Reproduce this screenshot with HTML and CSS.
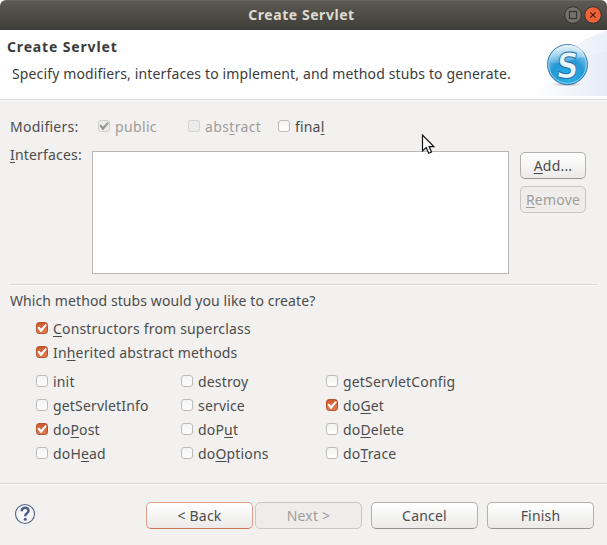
FILE: index.html
```html
<!DOCTYPE html>
<html lang="en">
<head>
<meta charset="utf-8">
<title>Create Servlet</title>
<link rel="stylesheet" href="styles.css">
</head>
<body>
<div class="window">
  <div class="titlebar">
    <span class="title">Create Servlet</span>
    <svg class="controls" width="40" height="18" viewBox="0 0 40 18">
      <circle cx="9" cy="9" r="8.3" fill="#74726b" stroke="#34332e"/>
      <rect x="5.5" y="5.5" width="7" height="7" fill="none" stroke="#33322e" stroke-width="1.2"/>
      <circle cx="29" cy="9" r="8.3" fill="#ed6237" stroke="#34332e"/>
      <path d="M26.3 6.3l5.4 5.4m0-5.4l-5.4 5.4" stroke="#4a2015" stroke-width="1.2"/>
    </svg>
  </div>
  <header class="banner">
    <div class="banner-text">
      <h1>Create Servlet</h1>
      <p>Specify modifiers, interfaces to implement, and method stubs to generate.</p>
    </div>
    <svg class="logo" width="75" height="66" viewBox="0 0 75 66">
      <defs>
        <linearGradient id="wash"><stop offset="0" stop-color="#fff"/><stop offset="1" stop-color="#e3e9f6"/></linearGradient>
        <radialGradient id="ball" cx=".5" cy=".8" r=".8"><stop offset="0" stop-color="#27b6e8"/><stop offset=".5" stop-color="#2499d5"/><stop offset="1" stop-color="#a5d5ed"/></radialGradient>
        <radialGradient id="shade"><stop offset="0" stop-color="#8d8288"/><stop offset="1" stop-color="#fff" stop-opacity="0"/></radialGradient>
        <linearGradient id="shine" x2="0" y2="1"><stop offset="0" stop-color="#fff" stop-opacity=".75"/><stop offset="1" stop-color="#fff" stop-opacity=".1"/></linearGradient>
      </defs>
      <path d="M0 66C28 46 30 12 75 1V66Z" fill="url(#wash)" opacity=".75"/>
      <path d="M0 66C22 48 40 26 75 22V66Z" fill="url(#wash)" opacity=".65"/>
      <ellipse cx="35" cy="54.5" rx="20" ry="2.5" fill="url(#shade)"/>
      <circle cx="35.5" cy="34.5" r="20" fill="url(#ball)" stroke="#3c79b4"/>
      <circle cx="35.5" cy="34.5" r="18.8" fill="none" stroke="#b5e0f4" stroke-opacity=".7"/>
      <path d="M18 32C18 10 53 10 53 28C43 25 34 37 18 32Z" fill="url(#shine)"/>
      <text class="logo-letter" text-anchor="middle" transform="translate(34.3 47.5) skewX(-6) scale(.88 1)">S</text>
    </svg>
  </header>
  <main>
    <div class="row modifiers">
      <span class="label">Modifiers:</span>
      <label class="check off on"><i></i><span>public</span></label>
      <label class="check off"><i></i><span>abs<u>t</u>ract</span></label>
      <label class="check"><i></i><span>fina<u>l</u></span></label>
    </div>
    <div class="row interfaces">
      <span class="label"><u>I</u>nterfaces:</span>
      <div class="list"></div>
      <div class="side">
        <button><span><u>A</u>dd...</span></button>
        <button disabled><span><u>R</u>emove</span></button>
      </div>
    </div>
    <div class="rule"></div>
    <p class="question">Which method stubs would you like to create?</p>
    <div class="stubs wide">
      <label class="check on"><i></i><span><u>C</u>onstructors from superclass</span></label>
      <label class="check on"><i></i><span>In<u>h</u>erited abstract methods</span></label>
    </div>
    <div class="stubs grid">
      <label class="check"><i></i><span>init</span></label>
      <label class="check"><i></i><span>destroy</span></label>
      <label class="check"><i></i><span>getServletConfig</span></label>
      <label class="check"><i></i><span>getServletInfo</span></label>
      <label class="check"><i></i><span>service</span></label>
      <label class="check on"><i></i><span>do<u>G</u>et</span></label>
      <label class="check on"><i></i><span>do<u>P</u>ost</span></label>
      <label class="check"><i></i><span>doP<u>u</u>t</span></label>
      <label class="check"><i></i><span>do<u>D</u>elete</span></label>
      <label class="check"><i></i><span>doH<u>e</u>ad</span></label>
      <label class="check"><i></i><span>do<u>O</u>ptions</span></label>
      <label class="check"><i></i><span>do<u>T</u>race</span></label>
    </div>
  </main>
  <footer>
    <svg width="22" height="22" viewBox="0 0 22 22">
      <circle cx="11" cy="11" r="9.5" fill="#f6f6f8" stroke="#536381" stroke-width="1.1"/>
      <path d="M7.7 8.2C7.8 3.6 14.6 3.7 14.5 7.8C14.4 10.3 11.2 10.2 11.2 13.2" fill="none" stroke="#4a5c86" stroke-width="2.4"/>
      <circle cx="11.2" cy="16.2" r="1.5" fill="#4a5c86"/>
    </svg>
    <div class="actions">
      <button class="focus">&lt; Back</button>
      <button disabled>Next &gt;</button>
      <button class="cancel">Cancel</button>
      <button class="finish">Finish</button>
    </div>
  </footer>
  <svg class="pointer" width="14" height="21" viewBox="0 0 14 21">
    <path d="M1.5 1V17L5.2 13.6L7.7 19.2L10.5 18L8.1 12.6H12.8Z" fill="#fff" stroke="#111" stroke-width="1.2"/>
  </svg>
</div>
</body>
</html>
```
FILE: styles.css
```css
* { box-sizing: border-box; }
body { margin: 0; background: #fff; }
.window {
  position: relative;
  width: 607px;
  height: 545px;
  display: flex;
  flex-direction: column;
  overflow: hidden;
  background: #f2f1f0;
  border-radius: 6px 6px 0 0;
  color: #4c4c4c;
  font: 14px/20px "Noto Sans", "Open Sans", sans-serif;
  letter-spacing: .14px;
  white-space: nowrap;
}
.titlebar {
  height: 30px;
  flex: none;
  display: grid;
  grid-template-columns: 1fr auto 1fr;
  align-items: center;
  padding: 0 3px 0 0;
  background: linear-gradient(#5c5a52, #3e3d38);
  border-top: 1px solid #6a675f;
  color: #dfdbd2;
}
.title { grid-column: 2; margin: -2px 1px 0 0; font-weight: 700; letter-spacing: .55px; }
.controls { justify-self: end; margin-top: -1px; }
.banner {
  height: 70px;
  flex: none;
  display: flex;
  justify-content: space-between;
  background: #fff;
  border-bottom: 1px solid #d9dadb;
}
.banner-text { padding: 7px 0 0 7px; }
h1 { margin: 0 0 7px; font-size: 14px; line-height: 20px; letter-spacing: .85px; color: #3c3c3c; }
.banner p { margin: 0 0 0 5px; color: #3c3c3c; }
.logo-letter {
  font: 700 35px "DejaVu Sans", sans-serif;
  letter-spacing: 0;
  fill: #e9f7fd;
  stroke: #286ca8;
  stroke-width: 1;
}
u { text-decoration: underline; text-decoration-thickness: 1px; text-underline-offset: 2px; text-decoration-skip-ink: none; }
main { flex: 1; padding: 16px 10px 0; border-top: 1px solid #faf9f9; }
.row { display: flex; }
.label { width: 82px; flex: none; }
.modifiers { height: 20px; margin-bottom: 8px; }
.modifiers .label, .interfaces .label { letter-spacing: .25px; }
.interfaces .label { letter-spacing: .18px; }
.modifiers .check:nth-of-type(1) { width: 90px; margin-left: 6px; }
.modifiers .check:nth-of-type(2) { width: 90px; }
.check { display: flex; align-items: center; height: 24px; letter-spacing: .17px; }
.modifiers .check { height: 20px; }
.modifiers .check.off { letter-spacing: .35px; }
.check i {
  width: 12px;
  height: 12px;
  margin: -2px 5px 0 0;
  flex: none;
  border: 1px solid #bdbbb8;
  border-radius: 3px;
  background: linear-gradient(#f3f3f3, #fff);
}
.check.on i {
  border-color: #b4552f;
  background: linear-gradient(#d0592d, #e27b55);
}
.check i::after {
  content: "";
  display: none;
  width: 10px;
  height: 8px;
  margin-top: 1px;
  background: #fff;
  clip-path: polygon(4% 48%, 20% 30%, 40% 60%, 86% 0, 100% 14%, 44% 100%, 36% 100%);
}
.check.on i::after { display: block; }
.check.off { color: #a09c98; }
.check.off i { border-color: #d3d1cf; background: #ececeb; }
.check.off i::after { background: #959595; }
.interfaces { height: 133px; }
.list {
  width: 417px;
  height: 123px;
  margin-top: 6px;
  background: #fff;
  border: 1px solid #b8b5b2;
}
.side { display: flex; flex-direction: column; gap: 7px; margin: 7px 0 0 11px; }
button {
  width: 66px;
  height: 27px;
  padding: 0;
  border: 1px solid #b3b1ae;
  border-bottom-color: #969492;
  border-radius: 5px;
  background: linear-gradient(#fff, #ebeae9);
  color: #4c4c4c;
  font: inherit;
  letter-spacing: .2px;
}
button:disabled { border-color: #c9c8c6; background: #eeedec; color: #a09c98; }
.rule { height: 2px; margin-top: 6px; border-top: 1px solid #d9d8d7; border-bottom: 1px solid #fafafa; }
.question { margin: 5px 0 6px; letter-spacing: .09px; }
.stubs { margin-left: 26px; }
.grid { display: grid; grid-template-columns: 145px 145px 1fr; margin-top: 5px; }
footer {
  height: 62px;
  flex: none;
  display: flex;
  justify-content: space-between;
  padding: 19px 13px 0 14px;
  border-top: 1px solid #d9d8d7;
  box-shadow: inset 0 1px #fafafa;
}
.actions { display: flex; }
.actions button { width: 107px; margin-left: 2px; margin-top: -1px; }
.actions .cancel, .actions .finish { margin-left: 9px; }
.actions .focus { border-color: #dfa18a; border-bottom-color: #c77652; }
.pointer { position: absolute; left: 421px; top: 134px; }
```
